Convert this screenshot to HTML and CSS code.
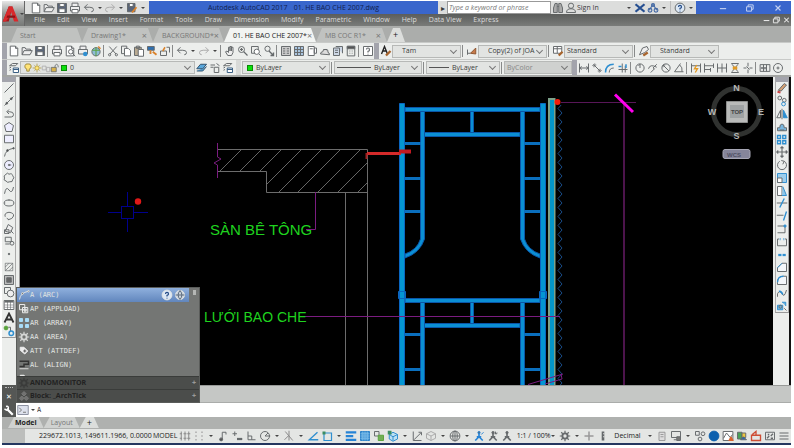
FILE: index.html
```html
<!DOCTYPE html>
<html lang="en">
<head>
<meta charset="utf-8">
<title>Autodesk AutoCAD 2017</title>
<link rel="stylesheet" href="styles.css">
</head>
<body>
<div class="window">
  <header class="top">
    <button class="app" aria-label="Application menu">
      <svg viewBox="0 0 24 24" aria-hidden="true"><path fill="#a3171b" d="M1 22 9 2h5l-5 20z"/><path fill="#d8292c" d="M9 2h5l8 20h-6l-4-13-3 8-4 5H1z"/><path fill="#8d1216" d="M7 14h10l1 3H6z"/></svg>
      <span class="caret"></span>
    </button>
    <div class="top-rows">
      <div class="titlebar">
        <div class="quick" data-tools="new open save print undo caret redo caret saveas caret"></div>
        <h1 class="title"><span>Autodesk AutoCAD 2017</span><span>01. HE BAO CHE 2007.dwg</span></h1>
        <div class="info">
          <button class="expand" aria-label="Collapse search">▸</button>
          <input class="search" type="text" aria-label="Search" placeholder="Type a keyword or phrase">
          <div class="info-tools" data-tools="find user"></div>
          <button class="signin"><span>Sign In</span><span class="caret"></span></button>
          <div class="info-tools" data-tools="exchange share caret"></div>
          <div class="info-tools help-tools" data-tools="help caret"></div>
        </div>
        <div class="winctl" data-tools="min restore close"></div>
      </div>
      <nav class="menubar">
        <button>File</button><button>Edit</button><button>View</button><button>Insert</button><button>Format</button><button>Tools</button><button>Draw</button><button>Dimension</button><button>Modify</button><button>Parametric</button><button>Window</button><button>Help</button><button>Data View</button><button>Express</button>
        <div class="docctl" data-tools="min restore close"></div>
      </nav>
    </div>
  </header>

  <nav class="tabs">
    <button class="tab">Start</button>
    <button class="tab">Drawing1*<span class="x">×</span></button>
    <button class="tab">BACKGROUND*<span class="x">×</span></button>
    <button class="tab wide active">01. HE BAO CHE 2007*<span class="x">×</span></button>
    <button class="tab">MB COC R1*<span class="x">×</span></button>
    <button class="tab add" aria-label="New tab">+</button>
  </nav>

  <div class="bar">
    <span class="grip"></span>
    <div class="tools" data-tools="new open save | print preview publish globe | cut copy paste match block | undo caret redo caret | pan zoom zoomwin zoomprev | props grid sheet markup tools calc | helpbox"></div>
    <span class="grip"></span>
    <div class="tools" data-tools="textstyle"></div>
    <label class="combo c70 indent"><select aria-label="Text style"><option>Tam</option></select></label>
    <div class="tools" data-tools="| dimstyle"></div>
    <label class="combo c70 indent"><select aria-label="Dimension style"><option>Copy(2) of JOA</option></select></label>
    <div class="tools" data-tools="| tablestyle"></div>
    <label class="combo c70"><select aria-label="Table style"><option>Standard</option></select></label>
    <div class="tools" data-tools="| leaderstyle"></div>
    <label class="combo c70 indent"><select aria-label="Multileader style"><option>Standard</option></select></label>
  </div>

  <div class="bar second">
    <span class="grip"></span>
    <div class="tools" data-tools="layers"></div>
    <div class="combo layer"><span class="tools" data-tools="bulb sun freeze lock"></span><span class="swatch"></span><select aria-label="Layer"><option>0</option></select></div>
    <div class="tools" data-tools="layerset layerprev layers"></div>
    <span class="grip light"></span>
    <div class="combo c88"><span class="swatch"></span><select aria-label="Color"><option>ByLayer</option></select></div>
    <div class="tools" data-tools="|"></div>
    <div class="combo c88"><span class="line"></span><select aria-label="Linetype"><option>ByLayer</option></select></div>
    <div class="tools" data-tools="|"></div>
    <div class="combo c74"><span class="line short"></span><select aria-label="Lineweight"><option>ByLayer</option></select></div>
    <div class="tools" data-tools="|"></div>
    <label class="combo c66 off"><select aria-label="Plot style" disabled><option>ByColor</option></select></label>
    <span class="grip"></span>
    <div class="tools" data-tools="dimlin dimali dimarc dimord | dimrad dimjog dimdia dimang | dimq dimbase dimcont dimspace dimbreak | tol center"></div>
  </div>

  <main class="work">
    <aside class="side">
      <div class="palette draw" data-tools="line xline pline polygon rect arc circle cloud spline ellipse earc insert makeblock point hatch gradient region table text addsel"></div>
    </aside>
    <svg class="canvas" viewBox="20 77 753 308" preserveAspectRatio="xMinYMin slice" role="img" aria-label="Model space">
      <defs>
        <clipPath id="slab"><path d="M218 150H367V192H266V171H218z"/></clipPath>
        <pattern id="net" x="557" y="104" width="6" height="9" patternUnits="userSpaceOnUse"><path d="M5 0 1 4.500 5 9" fill="none" stroke="#174a86"/></pattern>
      </defs>
      <g stroke="#00008c" fill="none"><path d="M108 212.500H121M134 212.500H148M127.500 192V206M127.500 219V232"/><rect x="121.500" y="206.500" width="12" height="12"/></g>
      <circle cx="138" cy="201.500" r="3.200" fill="#e01818"/>
      <path clip-path="url(#slab)" stroke="#666" d="M241 150l-50 50M261 150l-50 50M281 150l-50 50M301 150l-50 50M321 150l-50 50M340 150l-50 50M360 150l-50 50M380 150l-50 50M400 150l-50 50"/>
      <path fill="none" stroke="#6c6c6c" d="M218 149.500H367.500V385M218 171.500H266.500V192.500H367M345.500 193V385"/>
      <path fill="none" stroke="#7b1c80" d="M217.500 143V157L221 159 214 163 217.500 165V178M315.500 192V229.500H306"/>
      <g stroke="#0a56a8" fill="#0b8fd4" stroke-width="1">
        <path d="M405 107.500H540V111.500H405zM424 132.500H520V136.500H424zM470.500 111.500H473.500V132.500H470.500zM405 298.500H540V302.500H405zM424 323.500H520V327.500H424zM470.500 302.500H473.500V323.500H470.500z"/>
        <path d="M420.500 111.500H424.500V239Q420 253 405 258V254Q417 250 420.500 239zM524.500 111.500H520.500V239Q525 253 540 258V254Q528 250 524.500 239zM420.500 302.500H424.500V386H420.500zM520.500 302.500H524.500V386H520.500z"/>
      </g>
      <path stroke="#0a6fbe" stroke-width="3" d="M405 143.500H421M405 178.500H421M405 211.500H421M405 334.500H421M405 369.500H421M524 143.500H540M524 178.500H540M524 211.500H540M524 334.500H540M524 369.500H540"/>
      <g stroke="#0a66c0" fill="#0496d2"><path d="M399.500 103.500H404.500V386H399.500zM540.500 103.500H545.500V386H540.500zM398.500 291.500H405.500V298.500H398.500zM539.500 291.500H546.500V298.500H539.500z"/></g>
      <path fill="#7da28a" d="M548 98H555.500V385H548z"/><path fill="#0496c8" d="M550 100H554V385H550z"/>
      <rect x="557" y="105" width="6" height="280" fill="url(#net)"/>
      <path stroke="#7b1c80" fill="none" d="M300 316.500H560M528 384.500 563 374M545 384 562 379 561 374"/>
      <path stroke="#581658" fill="none" d="M561 102.500H636"/><path stroke="#4c144c" stroke-width="2" d="M624 104V385"/>
      <path stroke="#f0e" stroke-width="3" d="M615 94.500 633 112"/>
      <circle cx="557.500" cy="102" r="3" fill="#f31c0c"/>
      <path stroke="#d42a2a" stroke-width="3" d="M367 153.500H401"/><path stroke="#a02020" stroke-width="2" d="M366.500 153V159"/>
      <path stroke="#c11a22" stroke-width="4" d="M399 151.500H411"/>
      <g class="note"><text class="large" x="210" y="235">SÀN BÊ TÔNG</text><text x="204" y="322">LƯỚI BAO CHE</text></g>
      <circle cx="736.500" cy="111.500" r="23" fill="none" stroke="#303230" stroke-width="5"/>
      <path fill="#b9bab9" stroke="#8d8e8d" d="M726.500 101.500H747.500V122.500H726.500z"/><path fill="#9fa2a3" d="M730 105H744V118H730z"/>
      <g class="compass"><text x="736.500" y="91">N</text><text x="736.500" y="139">S</text><text x="712" y="115">W</text><text x="761" y="115">E</text></g>
      <text class="cube" x="737" y="114">TOP</text>
      <rect x="723" y="149.500" width="27" height="9" rx="2" fill="#85859a" stroke="#a7a7b5"/><text class="cube wcs" x="734" y="156.500">WCS</text>
    </svg>
    <aside class="side right">
      <div class="palette modify" data-tools="erase copyobj mirror offset array move rotate scale stretch trim extend breakpt break join chamfer fillet blend explode"></div>
    </aside>
  </main>

  <section class="command">
    <div class="handle"><span class="dots"></span><button aria-label="Close">✕</button><button aria-label="Customize"><span data-tools="wrench"></span></button></div>
    <div class="console">
      <div class="history"></div>
      <label class="prompt"><span data-tools="prompt"></span><span class="caret"></span><input type="text" value="A" aria-label="Command"></label>
      <div class="suggest">
        <ul class="matches">
          <li class="sel"><span data-tools="arc"></span>A (ARC)<span class="row-tools" data-tools="help web"></span></li>
          <li><span data-tools="appload"></span>AP (APPLOAD)</li>
          <li><span data-tools="arrayw"></span>AR (ARRAY)</li>
          <li><span data-tools="gearw"></span>AA (AREA)</li>
          <li><span data-tools="tag"></span>ATT (ATTDEF)</li>
          <li><span data-tools="align"></span>AL (ALIGN)</li>
          <li><span data-tools="tag"></span></li>
        </ul>
        <span class="thumb"></span>
        <div class="group"><span data-tools="gear"></span>ANNOMONITOR<b>+</b></div>
        <div class="group"><span data-tools="blockset"></span>Block: _ArchTick<b>+</b></div>
      </div>
    </div>
  </section>

  <nav class="layouts"><button class="tab active">Model</button><button class="tab">Layout</button><button class="tab add" aria-label="New layout">+</button></nav>

  <footer class="status">
    <span class="coords">229672.1013, 149611.1966, 0.0000</span>
    <button class="space">MODEL</button>
    <div class="tools" data-tools="sgrid sdots drop infer dyn ortho polar drop iso drop otrack osnap drop lwt transp cycle osnap3 drop ucs filter drop gizmo drop annob annov anno"></div>
    <button class="scale">1:1 / 100%<span class="caret"></span></button>
    <div class="tools" data-tools="gear drop plus units"></div>
    <button class="unit">Decimal<span class="caret"></span></button>
    <div class="tools" data-tools="quick lockui drop isolate blue perf clean trusted full menu"></div>
  </footer>
</div>
<script src="icons.js"></script>
</body>
</html>
```
FILE: styles.css
```css
* { box-sizing: border-box; }
body { margin: 0; background: #fff; font: 7px/10px "Open Sans", "Noto Sans", sans-serif; color: #3a3c3c; }
button, input, select { font: inherit; color: inherit; border: 0; padding: 0; margin: 0; background: none; border-radius: 0; min-width: 0; }
ul, h1 { margin: 0; padding: 0; font: inherit; list-style: none; }
svg { display: block; }

.window { display: flex; flex-direction: column; height: 100vh; padding: 1px 3px 3px 2px; }
[data-tools] { display: flex; align-items: center; flex: none; }
.tool { width: 13px; height: 13px; flex: none; display: grid; place-items: center; }
.tool svg { width: 12px; height: 12px; }
.bar .tool, .quick .tool, .info .tool, .palette .tool, .status .tool { color: #666a6c; }
.sep { width: 1px; height: 12px; background: #888a8a; margin: 0 2px 0 1px; flex: none; }
.caret { display: inline-block; flex: none; border: 2px solid transparent; border-top-color: #444; border-bottom: 0; }
.drop { width: 10px; flex: none; display: grid; place-items: center; }

.top { display: flex; flex: none; background: #6b6d6b; }
.app { width: 23px; height: 25px; background: linear-gradient(#e6e6e6, #969896 50%, #777977); display: flex; align-items: center; border-right: 1px solid #666; }
.app svg { width: 18px; height: 20px; }
.top-rows { flex: 1; min-width: 0; }
.titlebar { display: flex; height: 13px; background: #3966cc; align-items: stretch; }
.quick { width: 124px; background: #dedfde; padding-left: 4px; justify-content: space-between; padding-right: 2px; }
.quick .drop { width: 8px; }
.title { flex: 1; display: flex; justify-content: center; align-items: center; gap: 6px; color: #10204e; white-space: nowrap; overflow: hidden; }
.info { display: flex; background: #dcdddc; width: 258px; align-items: stretch; }
.expand { width: 9px; font-size: 8px; }
.search { width: 104px; background: #fff; border: 1px solid #999; padding: 0 1px; font-style: italic; }
.search::placeholder { color: #777; opacity: 1; }
.signin { width: 56px; display: flex; justify-content: space-between; align-items: center; padding-right: 2px; }
.help-tools { margin-left: auto; border-left: 1px solid #bbb; padding-left: 2px; }
.winctl { width: 95px; justify-content: space-between; padding: 0 7px 0 20px; color: #c3d1f2; }
.winctl svg { width: 10px; height: 10px; }
.menubar { display: flex; gap: 12px; height: 12px; padding-left: 9px; background: linear-gradient(#5b5d5b, #797b79); color: #dcdcdc; }
.docctl { margin-left: auto; color: #eee; }
.docctl .tool { width: 10px; }
.docctl svg { width: 9px; }

.tabs { display: flex; height: 16px; flex: none; padding: 2px 0 0 9px; background: #abadab; }
.tab { height: 14px; display: flex; align-items: center; justify-content: space-between; background: #c0c2c0; clip-path: polygon(6px 0, calc(100% - 5px) 0, 100% 100%, 0 100%); color: #777; white-space: nowrap; }
.tabs .tab { width: 71px; padding: 1px 6px 0 9px; }
.tabs .wide { width: 92px; }
.tab.active, .tabs .tab.active { background: #f2f4f2; color: #222; }
.x { font-size: 9px; color: #777; }
.tabs .tab.add { width: 18px; padding: 0 6px; font-size: 9px; background: #dcdedc; color: #222; }

.bar { display: flex; align-items: center; height: 17px; flex: none; background: #eceeec; border-top: 1px solid #c8cac8; overflow: hidden; }
.grip { width: 5px; height: 16px; background: #a3a4ac; flex: none; }
.grip.light { background: #d8dad8; margin: 0 1px 0 2px; }
.bar .drop { width: 9px; }
.combo { display: flex; align-items: center; position: relative; height: 13px; background: #e2e4e2; border: 1px solid #b7b9b7; flex: none; padding-left: 2px; }
.combo select { appearance: none; flex: 1; height: 11px; }
.combo::after { content: ""; width: 4px; height: 4px; border: solid #777; border-width: 0 1px 1px 0; rotate: 45deg; margin: 0 4px 2px 0; }
.combo.indent { padding-left: 9px; }
.c70 { width: 69px; }
.c88 { width: 88px; }
.c74 { width: 74px; }
.c66 { width: 68px; }
.off { color: #888; background: #cfd1cf; }
.off select { opacity: 1; }
.layer { width: 175px; }
.layer .tool { width: 9px; }
.layer .tool svg { width: 10px; }
.swatch { width: 6px; height: 6px; background: #0be00b; border: 1px solid #098a09; margin: 0 3px 0 2px; }
.line { width: 34px; height: 1px; background: #555; margin-right: 3px; }
.line.short { width: 20px; }
.second { height: 16px; }

.work { flex: 1; min-height: 0; display: flex; border-top: 2px solid #a3a5a3; background: #eceeec; }
.side { width: 18px; flex: none; border-right: 1px solid #999; }
.palette { flex-direction: column; width: 14px; border-top: 5px solid #a3a4ac; border-right: 1px solid #aaa; border-bottom: 1px solid #999; }
.palette .tool { flex: 1; height: auto; min-height: 0; }
.draw { height: 261px; }
.modify { height: 236px; border-left: 1px solid #aaa; }
.right { border: 0; border-right: 2px solid #111; padding-left: 2px; }
.canvas { flex: 1; min-width: 0; height: 100%; background: #000; }
.note { font: 14px "Liberation Sans", Arial, sans-serif; fill: #1fd31f; }
.large { font-size: 15px; }
.compass { font: bold 9px "Liberation Sans", sans-serif; fill: #b5b7b5; text-anchor: middle; }
.cube { font: bold 6px "Liberation Sans", sans-serif; fill: #444; text-anchor: middle; }
.wcs { fill: #505064; }

.command { display: flex; flex: none; }
.handle { width: 14px; background: #555755; display: flex; flex-direction: column; align-items: center; justify-content: space-between; color: #fff; }
.handle button { height: 13px; display: grid; place-items: center; }
.dots { width: 8px; height: 2px; margin-top: 2px; border-top: 1px dotted #bbb; }
.console { flex: 1; position: relative; }
.history { height: 18px; background: #c5c7c5; border-top: 1px solid #989a98; border-bottom: 1px solid #aaacaa; }
.prompt { display: flex; height: 14px; align-items: center; background: #fff; gap: 2px; }
.prompt input { flex: 1; font: 7px "DejaVu Sans Mono", monospace; }
.suggest { position: absolute; left: 0; bottom: 14px; width: 184px; background: #747674; border: 1px solid #5a5c5a; color: #e2e4e2; }
.matches { height: 88px; overflow: hidden; font: 7px/14px "DejaVu Sans Mono", monospace; margin-right: 10px; }
.matches li { display: flex; height: 14px; align-items: center; }
.matches .sel { background: linear-gradient(#8fb0dd, #6186bd); }
.row-tools { margin-left: auto; padding-right: 3px; }
.thumb { position: absolute; top: 2px; right: 3px; width: 3px; height: 5px; background: #b5b7b5; }
.group { display: flex; align-items: center; height: 13px; background: #4b4d4b; color: #222; font-weight: bold; border-top: 1px solid #3a3c3a; }
.group svg { opacity: .4; }
.group b { margin-left: auto; padding-right: 3px; color: #999; }

.layouts { display: flex; height: 12px; flex: none; background: #afb1af; padding-left: 6px; }
.layouts .tab { height: 11px; padding: 0 7px; color: #777; background: #d0d2d0; }
.layouts .tab.active { font-weight: bold; color: #222; }
.layouts .tab.add { color: #222; background: #dcdedc; font-size: 9px; }
.status { display: flex; align-items: center; height: 16px; flex: none; background: linear-gradient(90deg, #bcbebc 23px, #e4e6e4 23px); box-shadow: inset 0 -2px #24365f; padding: 0 0 2px 37px; white-space: nowrap; overflow: hidden; }
.coords { width: 115px; color: #222; }
.space { width: 25px; text-align: left; color: #222; }
.status .tool { width: 14px; }
.scale, .unit { display: flex; align-items: center; justify-content: space-between; color: #222; }
.scale { width: 38px; margin: 0 4px 0 3px; }
.unit { width: 38px; margin: 0 3px 0 4px; }
```
FILE: icons.js
```js
// Toolbar glyphs on a 16 x 16 grid. Strokes take currentColor unless set.
const doc = '<path d="M3 1.500h7l3 3v10H3z" fill="#fff"/><path d="M10 1.500v3h3"/>';
const help = '<circle cx="8" cy="8" r="6.500" fill="#dce8f5"/><path d="M6 6.500Q6 4.500 8 4.500T10 6.500Q10 8 8 8.500V10M8 11.500v1" stroke="#234a86" stroke-width="1.600"/>';
const gear = '<circle cx="8" cy="8" r="3.500" stroke-width="2.500"/><path d="M8 1v3M8 12v3M1 8h3M12 8h3M3 3l2 2M11 11l2 2M3 13l2-2M11 5l2-2" stroke-width="1.600"/>';
const man = '<circle cx="8" cy="3.500" r="1.500" fill="currentColor"/><path d="M8 4v5L3 14M8 9l5 5M5 9h6" stroke-width="2.200"/>';
const dimBase = '<path d="M2 2v12M14 2v12M2 8h12M5 6 2 8l3 2M11 6l3 2-3 2"/>';
const icons = {
  new: doc,
  open: '<path d="M1.500 13V3.500h4l1 2h6V8M1.500 13 4 7.500h11L12 13z" fill="#eee"/>',
  save: '<path d="M2 2h12v12H2z" fill="#596579"/><path d="M5 2h6v4H5zM4 9h8v5H4z" fill="#fff"/>',
  print: '<path d="M4 6V1.500h8V6M2 6h12v6H2z" fill="#eee"/><path d="M4 10h8v4.500H4z" fill="#fff"/>',
  preview: doc + '<circle cx="9" cy="9" r="3" fill="#fff"/><path d="m11 11 4 4"/>',
  publish: '<path d="M4 6V1.500h8V6M2 6h12v6H2z" fill="#eee"/><circle cx="11" cy="12" r="3" fill="#2f8fd0" stroke="none"/>',
  globe: '<circle cx="8" cy="9" r="5.500" fill="#8dbdd6"/><path d="M3 7h10M8 3v12" stroke="#59a23c"/><path d="m11 2 3 3" stroke="#d9822b" stroke-width="2"/>',
  cut: '<path d="m3 2 9 10M13 2 4 12"/><circle cx="3.500" cy="13" r="1.500"/><circle cx="12.500" cy="13" r="1.500"/>',
  copy: '<path d="M2 1.500h7v10H2z"/><path d="M6 4.500h5l3 3v7H6z" fill="#fff"/>',
  paste: '<path d="M2 3h9v11H2z" fill="#b9aa91"/><path d="M4.500 1.500h4v3h-4z"/><path d="M7 6h7v9H7z" fill="#fff"/>',
  match: '<path d="M2 2h9v5H2z" fill="#2f6fae"/><path d="M6 7v5M9 9l5 4" stroke="#d9822b" stroke-width="2.500"/>',
  block: '<path d="M2 8v6h8V8zM10 3h4v7"/><path d="m5 8 3-5" stroke="#d9822b" stroke-width="2"/>',
  undo: '<path d="M6 3 2 7l4 4M2 7h7q5 0 5 3t-3 3"/>',
  redo: '<path d="m10 3 4 4-4 4M14 7H7q-5 0-5 3t3 3" stroke="#aaa"/>',
  saveas: '<path d="M2 2h10v11H2z" fill="#596579"/><path d="M4.500 2h5v4h-5z" fill="#fff"/><path d="m8 14 6-7" stroke="#d9822b" stroke-width="2.500"/>',
  find: '<path d="M2 8 4 2h3v12H2zM14 8l-2-6H9v12h5zM7 6h2" fill="#aaa"/>',
  user: '<circle cx="8" cy="5" r="3.500"/><path d="M2 14q0-5 6-5t6 5z"/>',
  exchange: '<path d="m2 3 12 10M14 3 2 13" stroke="#264f91" stroke-width="3"/>',
  share: '<path d="m3 11 5-8 5 8" stroke="#456aa4" stroke-width="1.500"/><g stroke="#456aa4" stroke-width="1.500"><circle cx="8" cy="4" r="2"/><circle cx="4" cy="11" r="2.500"/><circle cx="12" cy="11" r="2.500"/></g>',
  help, helpbox: '<path d="M2 2h12v12H2z" fill="#fff"/><path d="M6 6Q6 4 8 4t2 2.500Q10 8 8 8.500V10M8 11.500v1" stroke-width="1.600"/>',
  min: '<path d="M3 9h10" stroke-width="1.800"/>',
  restore: '<path d="M2.500 6h8v7h-8zM5 6V3h8v7h-2.500" stroke-width="1.600"/>',
  close: '<path d="m4 4 8 8M12 4l-8 8" stroke-width="1.800"/>',
  pan: '<path d="M5 14 2 9l2-1 2 2V3h2v5-6h2v6-5h2v7l-2 4z" fill="#eee"/>',
  zoom: '<circle cx="6" cy="6" r="4"/><path d="m9 9 5 5M4 6h4M6 4v4" stroke-width="1.600"/>',
  zoomwin: '<path d="M2 2h9v9H2z"/><circle cx="9" cy="9" r="3.500" fill="#fff"/><path d="m12 12 3 3"/>',
  zoomprev: '<circle cx="6" cy="5" r="3.500"/><path d="m8 8 5 5M10 14h4v-4" stroke-width="1.800"/>',
  props: '<path d="M2 2h12v12H2z" fill="#ccc"/><path d="M4 5h3M9 5h3M4 8h3M9 8h3M4 11h3M9 11h3"/>',
  grid: '<path d="M2 2h12v12H2z" fill="#a9c5e0"/><path d="M2 6h12M2 10h12M6 2v12M10 2v12"/>',
  sheet: '<path d="M3 2h8v12H3zM11 4h3v7h-3z" fill="#fff"/><path d="M5 5h4"/>',
  markup: '<path d="M2 12q0-3 3-3 0-4 4-3 4 0 3 4 2 0 2 3z" fill="#ddd"/><path d="M6 6h5"/>',
  tools: '<path d="M2 4h8v10H2zM5 2h9v9" fill="#ccd6e4"/><path d="M4 7h4M4 10h4"/>',
  calc: '<path d="M3 1.500h10v13H3z"/><path d="M3 2h10v3H3z" fill="#555"/><path d="M6 8h1M9 8h1M6 11h1M9 11h1"/>',
  textstyle: '<path d="m2 12 4-10 4 10M4 8h4" stroke="#222" stroke-width="1.800"/><path d="m8 14 6-6" stroke="#a8642c" stroke-width="3"/>',
  dimstyle: '<path d="M2 6v7M2 11h4"/><path d="m6 11 7-7v8z" fill="#c77a4a" stroke="#8e5530"/>',
  tablestyle: '<path d="M2 2h11v9H2zM2 5h11M7 2v9" fill="#fff"/><path d="m9 14 5-5" stroke="#a8642c" stroke-width="3"/>',
  leaderstyle: '<path d="M2 13 6 4l6-2 2 4-5 4z" fill="#eee"/><path d="m7 14 6-4" stroke="#a8642c" stroke-width="3"/>',
  layers: '<path d="m2 5 4-3h7l-3 3zM2 8l2-1M2 11l2-1"/><path d="M7 8h7v6H7zM7 10h7" fill="#fff" stroke="#345a80"/>',
  bulb: '<path d="M8 1.500a4 4 0 0 1 2 8V13H6V9.500a4 4 0 0 1 2-8z" fill="#ffe477" stroke="#927d32"/>',
  sun: '<circle cx="8" cy="8" r="3.500" fill="#ffe477" stroke="#a79035"/><path d="M8 1v2M8 13v2M1 8h2M13 8h2M3 3l1 1M12 12l1 1M13 3l-1 1M3 13l1-1" stroke="#a79035"/>',
  freeze: '<path d="M2 5h6v6H2zM9 7h5v7H9z" stroke="#aaa"/>',
  lock: '<path d="M2 7h8v7H2z" fill="#d8b34c"/><path d="M8 7V4q3-4 5 0v3"/>',
  layerset: '<path d="m1 9 5-6h8l-5 6zM1 12h8l5-6" fill="#5aa8dc" stroke="#30506b"/>',
  layerprev: '<path d="M2 4h6M2 7h4M7 7h6v7H7zM10 2l4 3"/>',
  dimlin: dimBase,
  dimali: '<path d="m2 5 3-3M11 14l3-3M4 4l8 8M4 7V4h3M9 12h3V9"/>',
  dimarc: '<path d="M2 14Q2 3 13 3" stroke="#2f8fd0" stroke-width="2"/><path d="M7 14q0-6 6-6"/>',
  dimord: '<path d="M2 10h12M7 2v12M11 5v9" /><path d="M2 6h4M12 3v5" stroke="#2f8fd0" stroke-width="2"/>',
  dimrad: '<circle cx="8" cy="8" r="5.500"/><path d="M8 8V3M6 5l2-2"/>',
  dimjog: '<path d="M2 9Q4 2 13 7M5 14l5-5-2-1 5-5"/>',
  dimdia: '<circle cx="8" cy="8" r="5.500"/><path d="m4 4 8 8M4 7V4h3"/>',
  dimang: '<path d="M10 2 2 13h12M9 4q4 3 3 9"/>',
  dimq: '<path d="M2 2v12M14 2v12M2 5h12"/><path d="m9 4-3 5h4l-3 5" stroke="#e39a22" stroke-width="1.800"/>',
  dimbase: '<path d="M2 2v12M2 5h12M2 10h8M14 2v6M10 8v5"/>',
  dimcont: '<path d="M2 2v12M8 2v12M14 2v12M2 8h12"/>',
  dimspace: '<path d="M3 2h10M3 14h10M4 3l8 10M12 3 4 13" /><path d="M5 8h6" stroke="#e39a22" stroke-width="4"/>',
  dimbreak: '<path d="M2 8h4M10 8h4M8 1v5M8 10v5M6 6l4 4"/>',
  tol: '<path d="M1.500 3.500h13v9h-13zM6 3.500v9M10 3.500v9"/><circle cx="4" cy="8" r="1"/><path d="M7 8h2" stroke-width="3"/>',
  center: '<circle cx="8" cy="8" r="6"/><path d="M8 6v4M6 8h4"/>',
  line: '<path d="M2 14 14 2"/>',
  xline: '<path d="M2 14 14 2"/><circle cx="5" cy="11" r="1.200" fill="#444"/><circle cx="11" cy="5" r="1.200" fill="#444"/>',
  pline: '<path d="M2 12h9q3 0 3-3.500T9 5H6M8 2 5 5l3 3"/>',
  polygon: '<path d="m8 2 6 4-2 8H4L2 6z" fill="#eef"/>',
  rect: '<path d="M2 3h12v10H2z" fill="#eef"/>',
  arc: '<path d="M2 14Q3 5 14 3"/><circle cx="6" cy="6" r="1.200" fill="#444"/><circle cx="14" cy="3" r="1" fill="#444"/>',
  circle: '<circle cx="8" cy="8" r="6" fill="#eef"/><path d="M8 8h3"/><circle cx="8" cy="8" r="1"/>',
  cloud: '<path d="M4 3q2-3 4 0 4-2 5 2 3 3 0 5 0 4-4 3-3 2-5-1-4-1-2-4-2-3 2-5z"/>',
  spline: '<path d="M2 13Q4 2 8 8t6-4"/>',
  ellipse: '<ellipse cx="8" cy="8" rx="6.500" ry="4"/><path d="M8 3v2M2 8h1"/>',
  earc: '<path d="M3 9q-2-5 5-6 7 1 6 5t-7 5"/><path d="M5 11l3 2"/>',
  insert: '<path d="m3 11 4-9 6 4-3 7zM2 9h6v5H2zM10 10l4 4" fill="#eee"/>',
  makeblock: '<path d="M3 3h8v6H3zM3 12h6"/><circle cx="12" cy="11" r="2.500"/>',
  point: '<circle cx="8" cy="8" r="1" fill="#444"/>',
  hatch: '<path d="M3 3h10v10H3zM3 8l5-5M3 13 13 3M8 13l5-5" stroke-width=".9"/>',
  gradient: '<path d="M2 2h12v12H2z" fill="#bbb"/><path d="M5 5h6v6H5z" fill="#666"/>',
  region: '<path d="M2 2h8v8H2z"/><circle cx="10" cy="10" r="4.500" fill="#eee"/>',
  table: '<path d="M1.500 2h13v12h-13z" fill="#fff"/><path d="M2 3.500h12" stroke-width="2.500"/><path d="M2 8h12M2 11h12M6 3v11M10 3v11" stroke-width=".8"/>',
  text: '<path d="M2 14 8 2l6 12M4 10h8" stroke="#333" stroke-width="2.400"/>',
  addsel: '<circle cx="4" cy="4" r="2.500" fill="#59a23c" stroke="#59a23c"/><path d="M7 3h3v5"/><circle cx="11" cy="11" r="3" stroke="#2f8fd0" stroke-width="2"/>',
  erase: '<path d="m3 11 8-9 3 2-7 8z" fill="#d7a173"/><path d="m2 13 4 1" stroke="#c44" stroke-width="3"/>',
  copyobj: '<circle cx="5" cy="4" r="2.500"/><circle cx="11" cy="7" r="2.500"/><circle cx="10" cy="12" r="2.500" stroke="#2f8fd0"/>',
  mirror: '<path d="M6 3v10H1z"/><path d="M10 3v10h5z" fill="#2f8fd0" stroke="#2f8fd0"/><path d="M8 1v14"/>',
  offset: '<path d="M2 13V9h3q0-5 3-5t3 5h3v4z" fill="#79b7df"/><path d="M5 12h6"/>',
  array: '<path d="M2 2h4v4H2zM9 2h4v4H9zM2 9h4v4H2zM9 9h4v4H9z" stroke="#2f8fd0" stroke-width="1.800"/>',
  move: '<path d="M8 1v14M1 8h14M6 3l2-2 2 2M6 13l2 2 2-2M3 6 1 8l2 2M13 6l2 2-2 2" stroke-width="1.500"/>',
  rotate: '<path d="M11 3a6 6 0 1 1-6 0M11 3l-4-1M11 3 9 7"/>',
  scale: '<path d="M2 2h12v12H2z" fill="#9ccdec" stroke="#2f8fd0"/><path d="M2 8h6v6H2z" fill="#fff"/>',
  stretch: '<path d="M2 2h6v12H2z" fill="#fff"/><path d="m9 2 5 12H8" fill="#8dc5e8" stroke="#2f8fd0"/>',
  trim: '<path d="M1 8h14"/><path d="m5 14 6-12" stroke="#2f8fd0" stroke-width="1.800"/>',
  extend: '<path d="M1 7h9"/><path d="m10 14 4-12" stroke="#2f8fd0" stroke-width="1.800"/>',
  breakpt: '<path d="M2 13h10V4H2"/><circle cx="12" cy="4" r="1.500" fill="#2f8fd0" stroke="#2f8fd0"/>',
  break: '<path d="M4 4H2v9h12V4h-2"/><path d="M5 4h1M10 4h1" stroke="#2f8fd0" stroke-width="3"/>',
  join: '<path d="M3 8h10" stroke="#2f8fd0" stroke-width="3"/><path d="M8 6v4" stroke="#fff"/>',
  chamfer: '<path d="M2 14V9l6-6h6v11z" fill="#f4f7fa"/><path d="m2 9 6-6" stroke="#2f8fd0"/>',
  fillet: '<path d="M2 14v-3q0-8 8-8h4v11z" fill="#f4f7fa"/><path d="M2 11q0-8 8-8" stroke="#2f8fd0" stroke-width="1.700"/>',
  blend: '<path d="M2 13V9q3-6 6 0t6-5"/><path d="M4 6q3-1 5 4" stroke="#2f8fd0" stroke-width="2"/>',
  explode: '<path d="M2 7h7v6H2zM8 3h5v5" fill="#6cb2dc" stroke="#2f8fd0"/><circle cx="6" cy="9" r="2"/><path d="m11 11 3 3"/>',
  wrench: '<path d="m5 5 8 8" stroke="#fff" stroke-width="3"/><path d="M2 5q4 4 5 0T4 2" stroke="#fff" stroke-width="2"/>',
  prompt: '<path d="M1 2h14v12H1z" fill="#dde1ec" stroke="#8b90a0"/><path d="m3 5 3 3-3 3M8 11h4" stroke="#777"/>',
  web: '<circle cx="8" cy="8" r="6" fill="#ccd5df"/><g stroke="#59697b"><path d="M2 8h12M8 2q-5 6 0 12M8 2q5 6 0 12"/></g>',
  appload: '<path d="M2 2h7v7H2zM6 6h7v7H6z" stroke="#eee"/><path d="M8 8h3v3H8z" fill="#ddd"/>',
  arrayw: '<path d="M2 2h4v4H2zM10 2h4v4h-4zM2 10h4v4H2zM10 10h4v4h-4z" fill="#a9dcf8" stroke="#a9dcf8"/>',
  gear, gearw: '<g stroke="#d5d7d5">' + gear + '</g>',
  tag: '<path d="M3 3h5l5 5-4 4-6-5z" fill="#eee" stroke="#eee"/><path d="M7 8h4M9 6v4" stroke="#555"/>',
  align: '<path d="M2 3h12v4H8v3H2" stroke="#333" stroke-width="2"/><path d="M2 13h12" stroke="#ddd"/>',
  blockset: '<path d="m8 2 3 3-3 3-3-3zM5 8l3 3-3 3-3-3zM11 8l3 3-3 3-3-3z" fill="#aaa" stroke="#bbb"/>',
  sgrid: '<path d="M3 2v12M8 2v12M13 2v12M1 5h3M1 11h3M11 5h4M11 11h4M6 5h4M6 11h4" stroke="#888"/>',
  sdots: '<path d="M3 3h2M11 3h2M3 8h2M11 8h2M3 13h2M11 13h2" stroke="#aaa" stroke-width="2"/>',
  infer: '<path d="M7 13V3h5v3"/><circle cx="5.500" cy="12.500" r="2" fill="#555"/>',
  dyn: '<path d="M5 2v6M2 5h6"/><path d="M8 12h7" stroke-width="3"/>',
  ortho: '<path d="M4 2v11h10M4 8h5v5"/>',
  polar: '<circle cx="8" cy="8" r="6"/><path d="M8 8h7M8 8l4-4"/>',
  iso: '<path d="m3 2 10 12M8 1v13M2 13l5-5" stroke="#888"/>',
  otrack: '<path d="M14 3 3 13h12" stroke="#2f8fd0" stroke-width="1.800"/>',
  osnap: '<path d="M4 4h10v10H4z" stroke="#2f8fd0" stroke-width="1.600"/><path d="M2 2h4v4H2z" fill="#3b8d62" stroke="none"/>',
  lwt: '<path d="M1 3h14M1 8h10M1 13h14" stroke="#2683d5" stroke-width="3"/>',
  transp: '<path d="M2 2h12v12H2z" fill="#4597d7" stroke="#2a80c7"/><path d="M2 5h12M2 8h12M2 11h12M5 2v12M8 2v12M11 2v12" stroke="#78b9e7"/>',
  cycle: '<path d="M2 2h6v6H2z"/><path d="M7 7h7v7H7z" fill="#72ae55" stroke="#59a23c"/>',
  osnap3: '<path d="m8 3 6 3v6l-6 3-5-3V6z" fill="#bce0f3" stroke="#2f8fd0"/><path d="m3 6 5 3 6-3M8 9v5" stroke="#2f8fd0"/><path d="M1 1h5v5H1z" fill="#3b8d62" stroke="none"/>',
  ucs: '<path d="M3 2v12h11M4 13l9-9M10 3h4v4"/>',
  filter: '<path d="m8 2 6 3v6l-6 3-6-3V5zM2 5l6 3 6-3M8 8v6" stroke="#aaa"/>',
  gizmo: '<circle cx="8" cy="8" r="6.500"/><ellipse cx="8" cy="8" rx="3" ry="6.500"/><path d="M2 8h12M8 2v12"/>',
  annob: '<g stroke="#2683d5">' + man + '<path d="m11 6 3-3"/></g>',
  annov: man + '<path d="m11 2 1 4M10 5l4-1"/>',
  anno: man,
  plus: '<path d="M8 2v12M2 8h12" stroke-width="2" stroke="#999"/>',
  units: '<path d="M8 2v12" stroke-width="3.500"/><path d="M8 5h2M8 9h2" stroke="#ddd"/>',
  quick: '<path d="M4 3h8v11H4zM6 6h4M6 9h4" fill="#ddd" stroke="#999"/>',
  lockui: '<path d="M2 2h12v8H2zM5 13h4"/><path d="M9 9h5v5H9z" fill="#777"/>',
  isolate: '<path d="M2 2h5v5H2z"/><circle cx="12" cy="5" r="2.500"/><circle cx="8" cy="12" r="2.500"/>',
  blue: '<circle cx="8" cy="8" r="6.500" fill="#0c60ae" stroke="#0c60ae"/>',
  perf: '<path d="M1.500 2h13v12h-13z" fill="#fff"/><path d="m2 11 4-7 5 6 3-4"/><path d="m9 14 3-5 3 5z" fill="#d9622b" stroke="#d9622b"/>',
  clean: '<path d="M2 3h6v9H2z" fill="#4ba05a"/><path d="M8 4h5v6H8z" fill="#edc640"/><path d="m6 13 4-4 4 4z" fill="#2b66ad"/>',
  trusted: '<path d="M2 7h12v7H2zM3 6l5-4v5" stroke="#ce4e35" stroke-width="1.800"/>',
  full: '<path d="M2 3h12v10H2z"/><path d="m4 11 3-3M9 8l3-3M5 6h2M9 11h3" stroke-width="1.700"/>',
  menu: '<path d="M2 4h12M2 8h12M2 12h12" stroke-width="1.500"/>'
};

document.querySelectorAll('[data-tools]').forEach(bar => {
  bar.innerHTML = bar.dataset.tools.split(' ').map(name => {
    if (name === '|') return '<span class="sep"></span>';
    if (name === 'caret' || name === 'drop') return '<button class="drop" aria-label="More"><span class="caret"></span></button>';
    const svg = '<svg viewBox="0 0 16 16" fill="none" stroke="currentColor" stroke-width="1.300" aria-hidden="true">' + icons[name] + '</svg>';
    return bar.closest('button, label, li, .group, .combo')
      ? '<span class="tool">' + svg + '</span>'
      : '<button class="tool" aria-label="' + name + '">' + svg + '</button>';
  }).join('');
});
```
